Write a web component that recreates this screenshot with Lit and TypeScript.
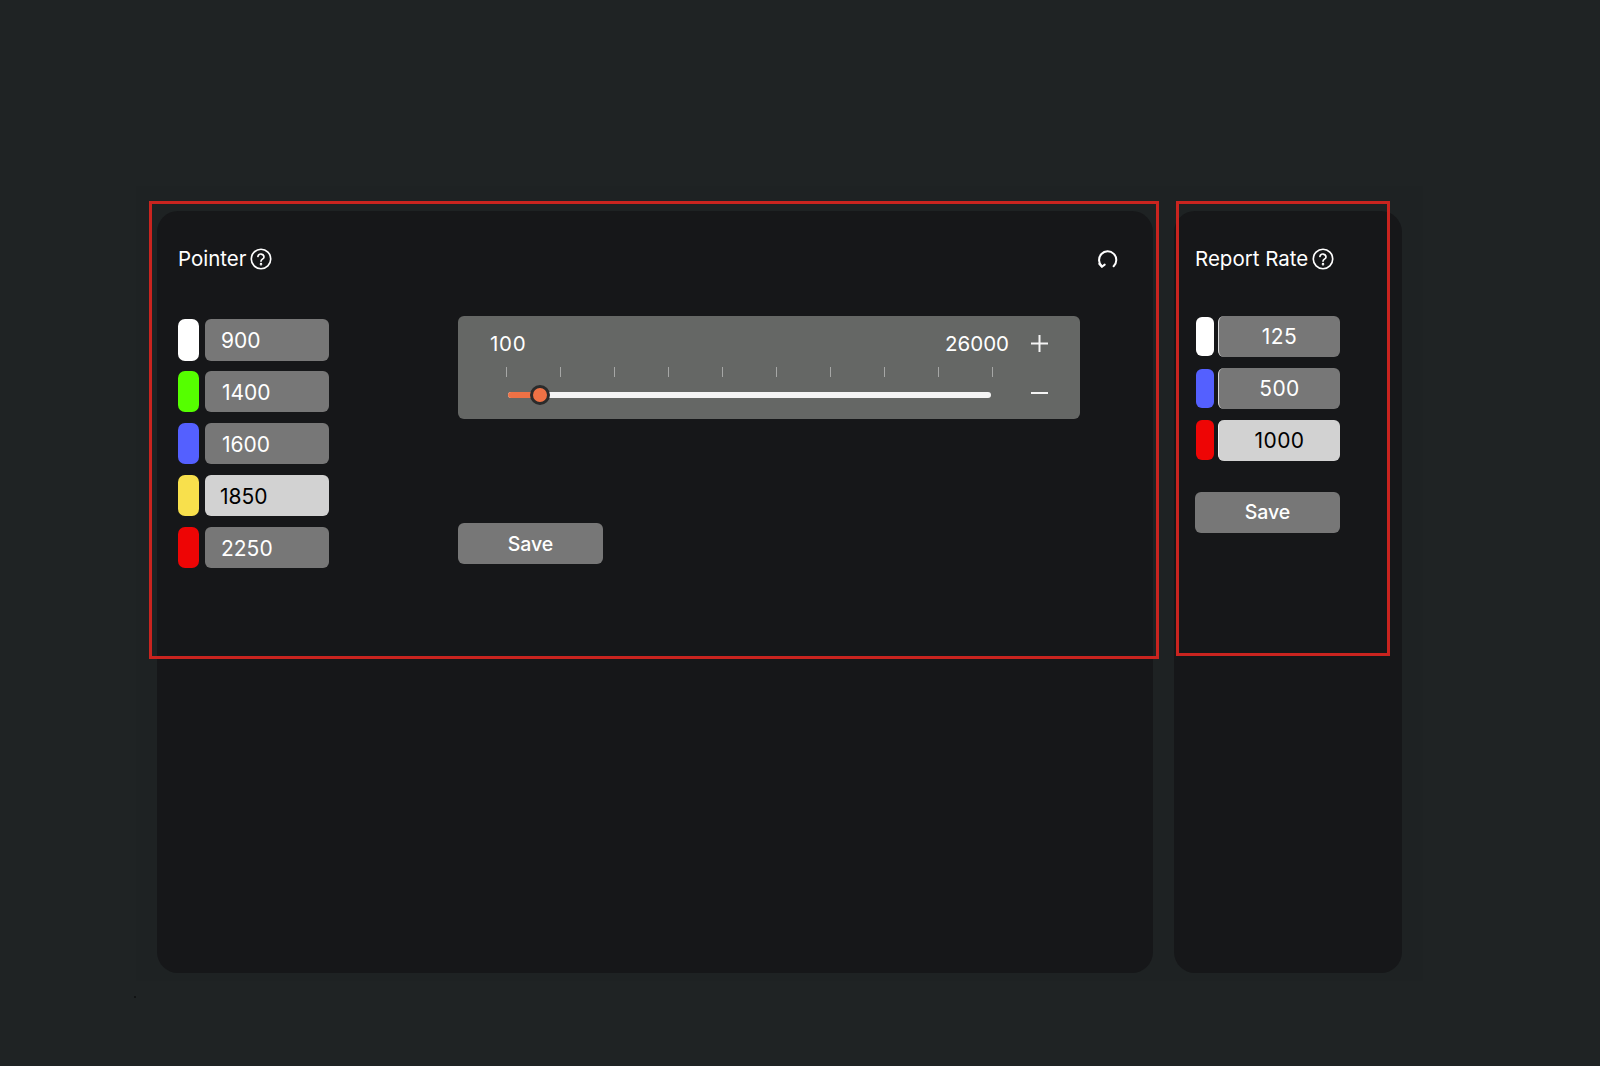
import { LitElement, html, css } from "lit";
import { customElement } from "lit/decorators.js";

const help = html`<svg class="help" viewBox="0 0 24 24" fill="none" stroke="currentColor" stroke-width="1.8" stroke-linecap="round" stroke-linejoin="round"><circle cx="12" cy="12" r="10.6"></circle><path d="M8.6 9.2a3.4 3.4 0 0 1 6.7.6c0 2.2-3.3 2.6-3.3 4.6"></path><circle cx="12" cy="17.6" r=".5" fill="currentColor"></circle></svg>`;
const reset = html`<svg class="reset" viewBox="0 0 24 24" fill="none" stroke="currentColor" stroke-width="2.1" stroke-linecap="round" stroke-linejoin="round"><path d="M6.2 19.2A9 9 0 1 1 18.4 19"></path><path d="M3.4 16.6l2.8 2.9 2.9-2.2"></path></svg>`;

const pointers = [
  { c: "#ffffff", v: "900", x: 16 },
  { c: "#55ff00", v: "1400", x: 17 },
  { c: "#5460ff", v: "1600", x: 17 },
  { c: "#f8e04c", v: "1850", x: 15, active: true },
  { c: "#ee0505", v: "2250", x: 16 },
];
const rates = [
  { c: "#ffffff", v: "125" },
  { c: "#5460ff", v: "500" },
  { c: "#ee0505", v: "1000", active: true },
];

@customElement("app-root")
export class AppRoot extends LitElement {
  static styles = css`
    :host { display: block; width: 1600px; height: 1066px; background: #1f2324; font-family: Inter, "Liberation Sans", sans-serif; color: #fff; overflow: hidden; }
    .page { position: relative; width: 1600px; height: 1066px; padding: 186px 0 0 136px; box-sizing: border-box; }
    .frame { width: 1287px; box-sizing: border-box; padding: 25px 21px 8px; background: #1e2223; }
    .panels { display: flex; gap: 21px; }
    .panel { height: 762px; background: #161719; border-radius: 21px; padding: 34px 21px 0; box-sizing: border-box; }
    .pointer { width: 996px; }
    .rate { width: 228px; }
    .head { display: flex; align-items: center; height: 28px; justify-content: space-between; }
    .title { display: flex; align-items: center; gap: 3.5px; font-size: 20.5px; line-height: 28px; }
    .help { width: 22px; height: 22px; display: block; }
    .reset { width: 23px; height: 23px; display: block; margin-right: 13px; }
    .body { display: flex; margin-top: 43px; }
    .list { width: 280px; padding-top: 3px; display: flex; flex-direction: column; gap: 10.4px; }
    .row { display: flex; gap: 6px; align-items: center; }
    .swatch { width: 21px; height: 41.5px; border-radius: 7px; }
    .field { width: 124px; height: 41.5px; border-radius: 6px; background: #777777; font-size: 21px; line-height: 43.5px; box-sizing: border-box; }
    .field.active { background: #d2d2d2; color: #000; }
    .col { display: flex; flex-direction: column; }
    .slider { width: 622px; height: 103px; background: #656765; border-radius: 6px; box-sizing: border-box; padding: 13px 0 0; }
    .line { display: flex; align-items: center; height: 28px; padding: 0 32px 0 32px; font-size: 20.5px; }
    .line span:first-child { flex: 1; letter-spacing: .7px; }
    .sym { width: 17px; margin-left: 22px; display: block; height: 17px; }
    .ticks { display: flex; justify-content: space-between; width: 487px; margin: 10px 0 0 47.5px; }
    .tick { width: 1px; height: 10px; background: #a6a7a6; }
    .trackrow { display: flex; align-items: center; margin-top: 3px; padding-left: 49.5px; height: 30px; }
    .track { position: relative; width: 483px; height: 6px; border-radius: 3px; background: #f4f4f4; }
    .fill { position: absolute; left: 0; top: 0; bottom: 0; width: 32px; border-radius: 3px 0 0 3px; background: #ee7145; }
    .thumb { position: absolute; left: 22px; top: -7px; width: 20px; height: 20px; box-sizing: border-box; border-radius: 50%; background: #ee7145; border: 3px solid #2b2b2b; }
    .minus { width: 17px; height: 2px; background: #f4f4f4; margin-left: 40px; margin-top: -4px; }
    .save { border: 0; padding: 0; font: inherit; color: #fff; background: #777777; border-radius: 6px; font-size: 19.5px; height: 41px; font-weight: 500; width: 145px; display: block; }
    .pointer .save { margin-top: 104px; }
    .rlist { display: flex; flex-direction: column; gap: 10.6px; }
    .rate .save { margin-top: 20.4px; }
    .rrow { display: flex; gap: 4px; align-items: center; }
    .rsw { width: 18px; height: 39.5px; border-radius: 6px; margin-left: 1px; }
    .rfield { width: 122px; height: 41.2px; border-radius: 6px; background: #777777; border-left: 1.5px solid #d8d8d8; box-sizing: border-box; font-size: 21px; line-height: 42.2px; text-align: center; letter-spacing: .4px; }
    .rfield.active { background: #d2d2d2; color: #000; border-left-color: #f2f2f2; }
    .mark { position: absolute; box-sizing: border-box; border: 3px solid #c9241f; pointer-events: none; }
    .m1 { left: 149px; top: 201px; width: 1010px; height: 458px; }
    .m2 { left: 1176px; top: 201px; width: 214px; height: 455px; }
    .speck { position: absolute; left: 134px; top: 996px; width: 2px; height: 2px; background: #111314; }
  `;

  render() {
    return html`<div class="page">
      <div class="frame">
        <div class="panels">
          <section class="panel pointer">
            <div class="head"><div class="title">Pointer ${help}</div>${reset}</div>
            <div class="body">
              <div class="list">
                ${pointers.map(p => html`<div class="row"><div class="swatch" style="background:${p.c}"></div><div class="field ${p.active ? "active" : ""}" style="padding-left:${p.x}px">${p.v}</div></div>`)}
              </div>
              <div class="col">
                <div class="slider">
                  <div class="line"><span>100</span><span>26000</span>
                    <svg class="sym" viewBox="0 0 17 17" stroke="#f4f4f4" stroke-width="2"><path d="M8.5 0v17M0 8.5h17"></path></svg>
                  </div>
                  <div class="ticks">${Array.from({ length: 10 }, () => html`<div class="tick"></div>`)}</div>
                  <div class="trackrow">
                    <div class="track"><div class="fill"></div><div class="thumb"></div></div>
                    <div class="minus"></div>
                  </div>
                </div>
                <button class="save">Save</button>
              </div>
            </div>
          </section>
          <section class="panel rate">
            <div class="head"><div class="title">Report Rate ${help}</div></div>
            <div class="body">
              <div class="rlist">
                ${rates.map(r => html`<div class="rrow"><div class="rsw" style="background:${r.c}"></div><div class="rfield ${r.active ? "active" : ""}">${r.v}</div></div>`)}
                <button class="save">Save</button>
              </div>
            </div>
          </section>
        </div>
      </div>
      <div class="mark m1"></div>
      <div class="mark m2"></div>
      <div class="speck"></div>
    </div>`;
  }
}
